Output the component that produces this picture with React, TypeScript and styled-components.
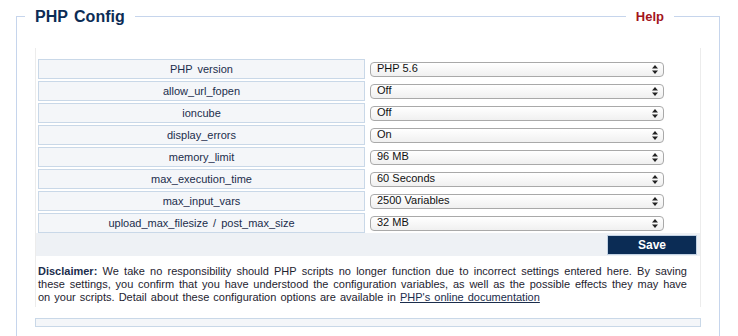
import React from 'react';
import styled, { createGlobalStyle } from 'styled-components';

const GlobalStyle = createGlobalStyle`
  html, body {
    margin: 0;
    padding: 0;
    background: #ffffff;
    font-family: "Liberation Sans", Arial, sans-serif;
  }
`;

const colors = {
  frame: '#c6d5ec',
  cellBorder: '#c9d8e8',
  cellBg: '#f4f6f9',
  band: '#eef1f5',
  navy: '#0b2c55',
  text: '#1b2d4c',
  red: '#a3141c',
};

const Frame = styled.div`
  margin: 16px 18px 0 16px;
  height: 320px;
  border: 1px solid ${colors.frame};
  border-bottom: none;
  box-sizing: border-box;
`;

const Header = styled.div`
  display: flex;
  justify-content: space-between;
  align-items: center;
  margin-top: -11px;
  height: 21px;
`;

const Title = styled.h2`
  margin: 0 0 0 8px;
  padding: 0 10px;
  background: #ffffff;
  font-size: 16px;
  line-height: 21px;
  font-weight: bold;
  color: ${colors.navy};
  word-spacing: 2px;
`;

const HelpLink = styled.a`
  margin-right: 45px;
  padding: 0 10px;
  background: #ffffff;
  font-size: 13px;
  font-weight: bold;
  color: ${colors.red};
  text-decoration: none;
  line-height: 21px;
`;

const Body = styled.div`
  padding: 21px 18px 0 18px;
`;

const Panel = styled.div`
  border-left: 1px solid #ececec;
  border-right: 1px solid #ececec;
  padding-top: 9px;
  padding-bottom: 3px;
`;

const Table = styled.table`
  width: 100%;
  border-collapse: separate;
  border-spacing: 2px;
`;

const LabelCell = styled.td`
  width: 325px;
  height: 18px;
  padding: 0;
  background: ${colors.cellBg};
  border: 1px solid ${colors.cellBorder};
  text-align: center;
  font-size: 11px;
  color: ${colors.text};
  word-spacing: 2px;
`;

const ValueCell = styled.td`
  padding: 0 0 0 3px;
  height: 20px;
`;

const SelectWrap = styled.div`
  position: relative;
  width: 294px;
  height: 15px;
`;

const Select = styled.select`
  appearance: none;
  -webkit-appearance: none;
  display: block;
  width: 100%;
  height: 15px;
  margin: 0;
  padding: 0 0 2px 6px;
  box-sizing: border-box;
  border: 1px solid #a9a9a9;
  border-radius: 4px;
  background: linear-gradient(#ffffff, #f0f0f0);
  font-family: "Liberation Sans", Arial, sans-serif;
  font-size: 11px;
  line-height: 11px;
  color: #111111;
  outline: none;
`;

const Arrows = styled.svg`
  position: absolute;
  right: 6px;
  top: 3px;
  pointer-events: none;
`;

const SaveBand = styled.div`
  display: flex;
  justify-content: flex-end;
  margin-top: -2px;
  padding: 2px 3px 1px 0;
  background: ${colors.band};
`;

const SaveButton = styled.button`
  width: 90px;
  height: 20px;
  padding: 0;
  border: 1px solid #c3d2e3;
  background: ${colors.navy};
  color: #ffffff;
  font-family: "Liberation Sans", Arial, sans-serif;
  font-size: 12px;
  font-weight: bold;
  cursor: pointer;
`;

const Disclaimer = styled.p`
  margin: 9px 13px 0 2px;
  font-size: 11px;
  line-height: 13px;
  color: #1e2330;
  text-align: justify;
  word-spacing: 1px;

  strong {
    color: ${colors.text};
  }

  a {
    color: ${colors.text};
    text-decoration: underline;
  }
`;

const BottomBox = styled.div`
  margin-top: 11px;
  height: 9px;
  box-sizing: border-box;
  border: 1px solid ${colors.cellBorder};
  background: ${colors.cellBg};
`;

const settings = [
  { name: 'PHP version', value: 'PHP 5.6' },
  { name: 'allow_url_fopen', value: 'Off' },
  { name: 'ioncube', value: 'Off' },
  { name: 'display_errors', value: 'On' },
  { name: 'memory_limit', value: '96 MB' },
  { name: 'max_execution_time', value: '60 Seconds' },
  { name: 'max_input_vars', value: '2500 Variables' },
  { name: 'upload_max_filesize / post_max_size', value: '32 MB' },
];

const SelectArrows = () => (
  <Arrows width="6" height="9" viewBox="0 0 6 9" aria-hidden>
    <path d="M3 0 L6 3.5 L0 3.5 Z" fill="#222" />
    <path d="M0 5.5 L6 5.5 L3 9 Z" fill="#222" />
  </Arrows>
);

const App: React.FC = () => {
  return (
    <>
      <GlobalStyle />
      <Frame>
        <Header>
          <Title>PHP Config</Title>
          <HelpLink href="#">Help</HelpLink>
        </Header>
        <Body>
          <Panel>
            <Table>
              <tbody>
                {settings.map(s => (
                  <tr key={s.name}>
                    <LabelCell>{s.name}</LabelCell>
                    <ValueCell>
                      <SelectWrap>
                        <Select defaultValue={s.value}>
                          <option>{s.value}</option>
                        </Select>
                        <SelectArrows />
                      </SelectWrap>
                    </ValueCell>
                  </tr>
                ))}
              </tbody>
            </Table>
            <SaveBand>
              <SaveButton type="button">Save</SaveButton>
            </SaveBand>
            <Disclaimer>
              <strong>Disclaimer:</strong> We take no responsibility should PHP scripts no longer
              function due to incorrect settings entered here. By saving these settings, you confirm
              that you have understood the configuration variables, as well as the possible effects
              they may have on your scripts. Detail about these configuration options are available
              in <a href="#">PHP's online documentation</a>
            </Disclaimer>
          </Panel>
          <BottomBox />
        </Body>
      </Frame>
    </>
  );
};

export default App;
